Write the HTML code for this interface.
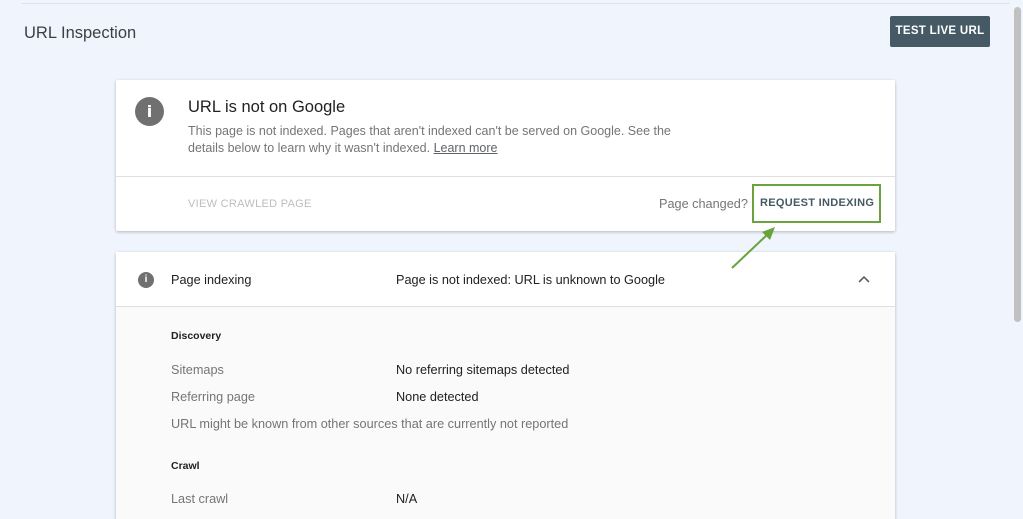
<!DOCTYPE html>
<html><head><style>
*{margin:0;padding:0;box-sizing:border-box}
html,body{width:1023px;height:519px;overflow:hidden}
body{background:#f0f4fc;font-family:"Liberation Sans",Arial,sans-serif;position:relative;color:#202124}
.abs{position:absolute}
.topline{left:21px;top:3px;width:989px;height:1px;background:#dfe3ea}
.title{left:24px;top:24px;font-size:16.5px;color:#3c4043}
.btn{left:890px;top:16px;width:100px;height:31px;background:#455a64;color:#fff;font-size:11.5px;font-weight:bold;letter-spacing:.3px;text-align:center;line-height:31px;border-radius:2px}
.sb{left:1012px;top:3px;width:11px;height:516px;background:#f0f4fc}
.thumb{left:1014px;top:7px;width:7px;height:315px;background:#c1c1c1;border-radius:4px}
.card{background:#fff;box-shadow:0 1px 3px rgba(0,0,0,.25);border-radius:2px}
.ic{border-radius:50%;background:#707070;color:#fff;font-weight:bold;text-align:center}
.lbl{color:#757575;font-size:12.7px}
.val{color:#202124;font-size:12.7px}
.h{font-size:10.5px;font-weight:bold;color:#202124}
</style></head><body>
<div class="abs topline"></div>
<div class="abs title">URL Inspection</div>
<div class="abs btn">TEST LIVE URL</div>
<div class="abs sb"></div><div class="abs thumb"></div>

<div class="abs card" style="left:116px;top:80px;width:779px;height:151px">
  <div class="abs ic" style="left:19px;top:17px;width:29px;height:29px;font-size:16px;line-height:29px;font-family:'DejaVu Sans',sans-serif">i</div>
  <div class="abs" style="left:72px;top:18px;font-size:16.5px;color:#202124">URL is not on Google</div>
  <div class="abs" style="left:72px;top:43px;font-size:12.5px;line-height:17px;color:#757575;width:520px">This page is not indexed. Pages that aren't indexed can't be served on Google. See the details below to learn why it wasn't indexed. <span style="text-decoration:underline;color:#5f6368">Learn more</span></div>
  <div class="abs" style="left:0;top:96px;width:779px;height:1px;background:#e0e0e0"></div>
  <div class="abs" style="left:72px;top:118px;font-size:11px;color:#bdbdbd;letter-spacing:.3px">VIEW CRAWLED PAGE</div>
  <div class="abs" style="left:543px;top:117px;font-size:12.7px;color:#757575">Page changed?</div>
  <div class="abs" style="left:636px;top:104px;width:129px;height:39px;border:2px solid #6aa23c"></div>
  <div class="abs" style="left:644px;top:117px;font-size:11px;font-weight:bold;color:#455a64;letter-spacing:.3px">REQUEST INDEXING</div>
</div>

<div class="abs card" style="left:116px;top:252px;width:779px;height:280px;background:#fafafa">
  <div class="abs" style="left:0;top:0;width:779px;height:55px;background:#fff;border-bottom:1px solid #e0e0e0"></div>
  <div class="abs ic" style="left:22px;top:20px;width:16px;height:16px;font-size:10px;line-height:16px">i</div>
  <div class="abs val" style="left:55px;top:21px">Page indexing</div>
  <div class="abs val" style="left:280px;top:21px">Page is not indexed: URL is unknown to Google</div>
  <svg class="abs" style="left:741px;top:22px" width="14" height="10"><polyline points="2,8 7,3 12,8" fill="none" stroke="#5f6368" stroke-width="1.6"/></svg>
  <div class="abs h" style="left:55px;top:78px">Discovery</div>
  <div class="abs lbl" style="left:55px;top:111px">Sitemaps</div>
  <div class="abs val" style="left:280px;top:111px">No referring sitemaps detected</div>
  <div class="abs lbl" style="left:55px;top:138px">Referring page</div>
  <div class="abs val" style="left:280px;top:138px">None detected</div>
  <div class="abs lbl" style="left:55px;top:165px">URL might be known from other sources that are currently not reported</div>
  <div class="abs h" style="left:55px;top:208px">Crawl</div>
  <div class="abs lbl" style="left:55px;top:240px">Last crawl</div>
  <div class="abs val" style="left:280px;top:240px">N/A</div>
</div>
<svg class="abs" style="left:725px;top:222px;z-index:5" width="55" height="50"><line x1="7" y1="46" x2="44" y2="11" stroke="#6aa23c" stroke-width="2"/><polygon points="50,5 37,10 45,18" fill="#6aa23c"/></svg>
</body></html>
